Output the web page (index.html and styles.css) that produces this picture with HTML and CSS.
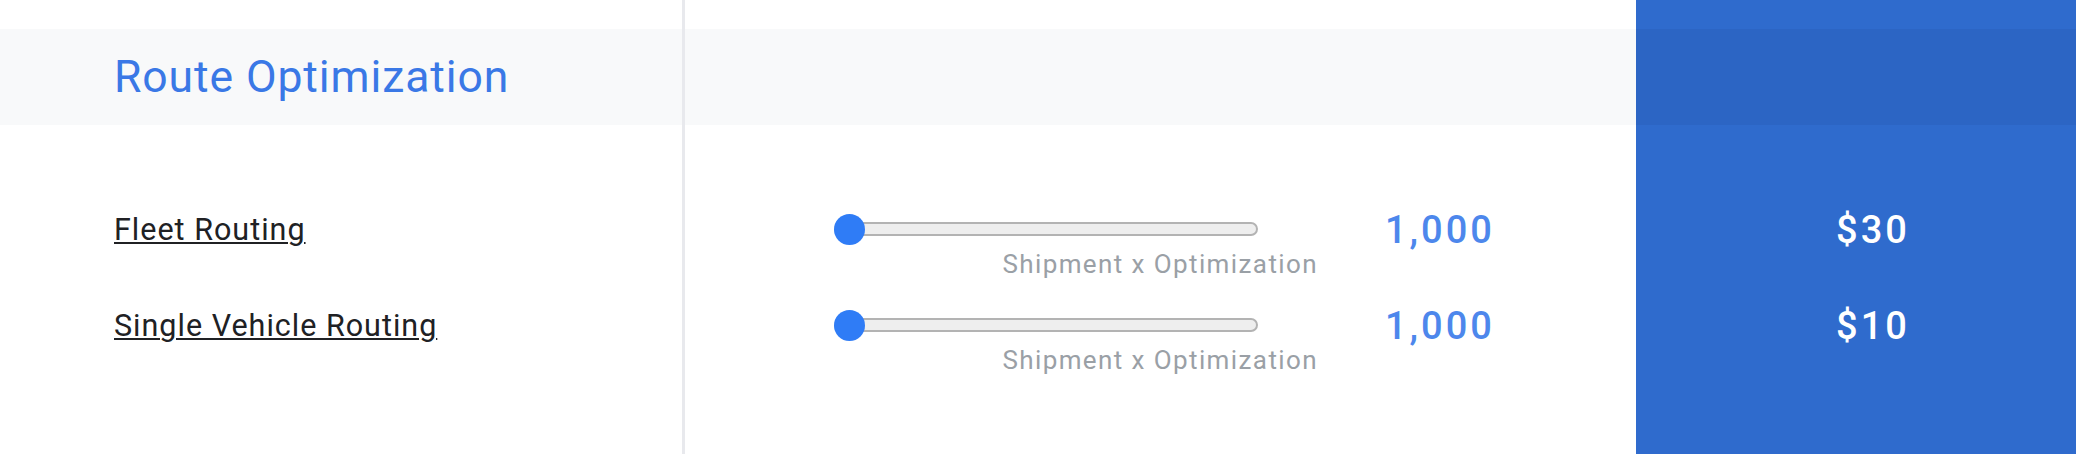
FILE: index.html
```html
<!DOCTYPE html>
<html lang="en">
<head>
<meta charset="utf-8">
<title>Route Optimization</title>
<link rel="stylesheet" href="styles.css">
</head>
<body>
<div class="pricing">
  <div class="col col-name">
    <div class="spacer"></div>
    <div class="head"><h2 class="title">Route Optimization</h2></div>
    <div class="rows">
      <div class="row"><a class="sku" href="#">Fleet Routing</a></div>
      <div class="row"><a class="sku" href="#">Single Vehicle Routing</a></div>
    </div>
  </div>
  <div class="col col-mid">
    <div class="spacer"></div>
    <div class="head"></div>
    <div class="rows">
      <div class="row mid-row">
        <div class="slider">
          <div class="track"><span class="thumb"></span></div>
          <div class="unit">Shipment x Optimization</div>
        </div>
        <div class="num">1,000</div>
      </div>
      <div class="row mid-row">
        <div class="slider">
          <div class="track"><span class="thumb"></span></div>
          <div class="unit">Shipment x Optimization</div>
        </div>
        <div class="num">1,000</div>
      </div>
    </div>
  </div>
  <div class="col col-price">
    <div class="spacer"></div>
    <div class="head head-dark"></div>
    <div class="rows">
      <div class="row price-row"><div class="price">$30</div></div>
      <div class="row price-row"><div class="price">$10</div></div>
    </div>
  </div>
</div>
</body>
</html>
```
FILE: styles.css
```css
* { box-sizing: border-box; }
html, body { margin: 0; padding: 0; background: #ffffff; }
body { width: 2076px; height: 454px; overflow: hidden; font-family: Roboto, "Liberation Sans", sans-serif; }

.pricing { display: flex; height: 454px; }
.col { display: flex; flex-direction: column; }
.col-name { width: 685px; border-right: 3px solid #e8e9ed; }
.col-mid { width: 951px; }
.col-price { flex: 1; background: #2f6bcd; }

.spacer { height: 29px; }
.head { height: 96px; background: #f8f9fa; }
.head-dark { background: #2c65c4; }

.title {
  margin: 0;
  padding-left: 114px;
  font-size: 44.5px;
  line-height: 96px;
  font-weight: 400;
  letter-spacing: 0.9px;
  color: #3a78e6;
}

.rows { padding-top: 57px; }
.row { height: 96px; }

.col-name .row { padding-left: 114px; padding-top: 28px; }
.sku {
  font-size: 30.5px;
  line-height: 40px;
  letter-spacing: 1px;
  color: #202124;
  text-decoration: underline;
  text-decoration-thickness: 2px;
  text-underline-offset: 2px;
}

.mid-row { display: flex; align-items: flex-start; }
.slider { width: 484px; margin-left: 149px; padding-top: 40px; }
.track {
  position: relative;
  width: 424px;
  height: 14px;
  border: 2px solid #b3b3b3;
  border-radius: 7px;
  background: #eeeeee;
}
.thumb {
  position: absolute;
  left: -2px;
  top: -10.5px;
  width: 31px;
  height: 31px;
  border-radius: 50%;
  background: #2f7cf6;
}
.unit {
  margin-top: 13px;
  text-align: right;
  font-size: 26px;
  line-height: 30px;
  letter-spacing: 1.4px;
  color: #9aa0a6;
}
.num {
  margin-left: 67px;
  margin-top: 26px;
  font-size: 38px;
  line-height: 44px;
  font-weight: 500;
  letter-spacing: 3px;
  color: #4d87ec;
}

.price-row { padding-top: 26px; padding-left: 34px; text-align: center; }
.price {
  font-size: 38px;
  line-height: 44px;
  font-weight: 500;
  letter-spacing: 3px;
  color: #ffffff;
}
```
